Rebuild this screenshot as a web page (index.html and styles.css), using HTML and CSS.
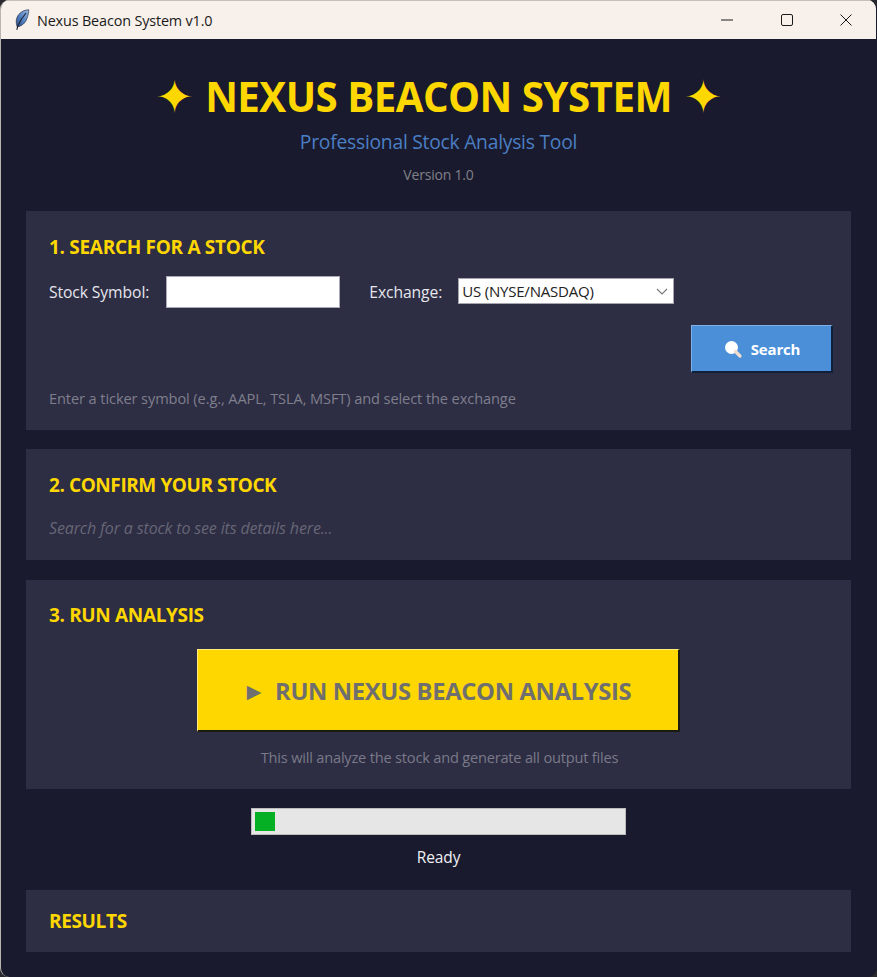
FILE: index.html
```html
<!DOCTYPE html>
<html lang="en">
<head>
<meta charset="utf-8">
<title>Nexus Beacon System v1.0</title>
<link rel="stylesheet" href="styles.css">
</head>
<body>
<div class="window">
  <header class="titlebar">
    <svg class="feather" width="16" height="22" viewBox="0 0 16 22">
      <defs><linearGradient id="quill" x1="1" y1="0" x2="0" y2="1"><stop offset="0" stop-color="#9db8de"/><stop offset=".55" stop-color="#4f7fc0"/><stop offset="1" stop-color="#2c4a80"/></linearGradient></defs>
      <path d="M14.800 .8C10 .8 5 3.500 3 8.500C1.800 11.500 2 15 3.300 18C8 17 11.500 14 13 9.500C14 6.500 14.700 3.500 14.800 .8Z" fill="url(#quill)" stroke="#2c3550" stroke-width=".7"/>
      <path d="M12 4C9 7.500 6 12 3.800 17L2.800 20.800" fill="none" stroke="#1b2233" stroke-width="1.100"/>
    </svg>
    <span class="window-title">Nexus Beacon System v1.0</span>
    <div class="controls">
      <span class="control"><svg width="12" height="12" viewBox="0 0 12 12"><path d="M0 6H12" stroke="#1a1a1a" stroke-width="1"/></svg></span>
      <span class="control"><svg width="12" height="12" viewBox="0 0 12 12"><rect x=".5" y=".5" width="11" height="11" rx="1.500" fill="none" stroke="#1a1a1a" stroke-width="1"/></svg></span>
      <span class="control"><svg width="12" height="12" viewBox="0 0 12 12"><path d="M.5 .5L11.500 11.500M11.500 .5L.5 11.500" stroke="#1a1a1a" stroke-width="1"/></svg></span>
    </div>
  </header>
  <main class="content">
    <div class="hero">
      <h1 class="brand"><span class="star">✦</span><span>NEXUS BEACON SYSTEM</span><span class="star">✦</span></h1>
      <p class="tagline">Professional Stock Analysis Tool</p>
      <p class="version">Version 1.0</p>
    </div>
    <section class="card card-search">
      <h2 class="card-title">1. SEARCH FOR A STOCK</h2>
      <div class="form-row">
        <label class="field-label">Stock Symbol:</label>
        <div class="symbol-input"></div>
        <label class="field-label exchange-label">Exchange:</label>
        <div class="select">
          <span class="select-value">US (NYSE/NASDAQ)</span>
          <svg width="12" height="7" viewBox="0 0 12 7"><path d="M1 1L6 6L11 1" fill="none" stroke="#777" stroke-width="1.100"/></svg>
        </div>
      </div>
      <div class="button-row">
        <button class="search-btn">
          <svg width="20" height="20" viewBox="0 0 20 20"><circle cx="8.500" cy="8.500" r="6.500" fill="#fff"/><path d="M12.500 12.500L17 17" stroke="#f0ddd0" stroke-width="3.200" stroke-linecap="round"/></svg>
          <span>Search</span>
        </button>
      </div>
      <p class="hint">Enter a ticker symbol (e.g., AAPL, TSLA, MSFT) and select the exchange</p>
    </section>
    <section class="card card-confirm">
      <h2 class="card-title">2. CONFIRM YOUR STOCK</h2>
      <p class="placeholder">Search for a stock to see its details here...</p>
    </section>
    <section class="card card-run">
      <h2 class="card-title">3. RUN ANALYSIS</h2>
      <button class="run-btn"><span class="play">▶</span><span>RUN NEXUS BEACON ANALYSIS</span></button>
      <p class="run-note">This will analyze the stock and generate all output files</p>
    </section>
    <div class="progress"><div class="progress-fill"></div></div>
    <p class="status">Ready</p>
    <section class="card card-results">
      <h2 class="card-title">RESULTS</h2>
    </section>
  </main>
</div>
</body>
</html>
```
FILE: styles.css
```css
* { box-sizing: border-box; }
html, body { margin: 0; height: 100%; }
body {
  background: #2a2a2e;
  font-family: "Open Sans", "Noto Sans", sans-serif;
  overflow: hidden;
}
.window {
  height: 977px;
  display: flex;
  flex-direction: column;
  background: #1a1a2e;
  border-left: 1px solid #b9b5b0;
  border-right: 1px solid #1a1a2e;
  border-radius: 9px;
  overflow: hidden;
}
.titlebar {
  height: 39px;
  flex: none;
  display: flex;
  align-items: center;
  background: #f8f1eb;
  border-top: 1px solid #c4c0bb;
  padding-left: 13px;
}
.feather { flex: none; }
.window-title {
  margin-left: 7px;
  font-size: 14.400px;
  letter-spacing: -.15px;
  color: #1a1a1a;
}
.controls { margin-left: auto; display: flex; }
.control {
  width: 59.500px;
  height: 38px;
  display: flex;
  align-items: center;
  justify-content: center;
}
.content {
  flex: 1;
  padding: 0 25px;
  display: flex;
  flex-direction: column;
  min-height: 0;
}
.hero {
  display: flex;
  flex-direction: column;
  align-items: center;
  height: 172px;
  flex: none;
}
.brand {
  margin: 29px 0 0;
  display: flex;
  align-items: center;
  gap: 12px;
  font-size: 40.300px;
  line-height: 58px;
  font-weight: 700;
  letter-spacing: -.55px;
  color: #ffd700;
  white-space: pre;
}
.star { font-family: "DejaVu Sans", sans-serif; font-weight: 400; font-size: 46px; }
.tagline {
  margin: 2px 0 0;
  font-size: 19.300px;
  line-height: 28px;
  letter-spacing: -.25px;
  color: #4a7fc4;
}
.version {
  margin: 9px 0 0;
  font-size: 14px;
  line-height: 20px;
  letter-spacing: -.2px;
  color: #808088;
}
.card {
  flex: none;
  background: #2d2d44;
  padding: 0 19px 0 23px;
}
.card-title {
  margin: 0;
  font-size: 19px;
  line-height: 26px;
  font-weight: 700;
  letter-spacing: -.35px;
  color: #ffd700;
}
.card-search { height: 219px; padding-top: 23px; }
.card-search .card-title { letter-spacing: -.3px; }
.form-row {
  display: flex;
  align-items: center;
  margin-top: 16px;
  height: 32px;
}
.field-label {
  font-size: 15.700px;
  letter-spacing: -.1px;
  color: #e6e6ec;
}
.symbol-input {
  margin-left: 17px;
  width: 174px;
  height: 32px;
  background: #fff;
  border: 1px solid #a9a9b8;
}
.exchange-label { margin-left: 29px; }
.select {
  margin-left: 16px;
  width: 216px;
  height: 26px;
  margin-top: -2px;
  background: #fff;
  border: 1px solid #a6a6ae;
  display: flex;
  align-items: center;
  justify-content: space-between;
  padding: 0 5px 0 3px;
}
.select-value { font-size: 15px; letter-spacing: -.2px; color: #222; }
.button-row {
  display: flex;
  justify-content: flex-end;
  margin-top: 17px;
  margin-right: -1px;
}
.search-btn {
  width: 142px;
  height: 48px;
  display: flex;
  align-items: center;
  justify-content: center;
  gap: 8px;
  background: #4a8fd8;
  border: 0;
  border-top: 1px solid #7fb0e8;
  border-left: 1px solid #7fb0e8;
  border-right: 2px solid #11203a;
  border-bottom: 2px solid #11203a;
  color: #fff;
  font-family: inherit;
  font-size: 15px;
  font-weight: 700;
  letter-spacing: -.2px;
  padding: 0;
}
.hint {
  margin: 15px 0 0;
  font-size: 14.600px;
  line-height: 20px;
  letter-spacing: -.1px;
  color: #7f7f8c;
}
.card-confirm { margin-top: 19px; height: 111px; padding-top: 23px; }
.card-confirm .card-title { letter-spacing: -.42px; }
.placeholder {
  margin: 19px 0 0;
  font-size: 16px;
  line-height: 22px;
  font-style: italic;
  letter-spacing: -.15px;
  color: #666674;
}
.card-run {
  margin-top: 20px;
  height: 209px;
  padding-top: 22px;
  display: flex;
  flex-direction: column;
  align-items: flex-start;
}
.run-btn {
  align-self: center;
  margin: 21px 4px 0 0;
  width: 483px;
  height: 83px;
  display: flex;
  align-items: center;
  justify-content: center;
  gap: 14px;
  background: #ffd700;
  border: 0;
  border-top: 1px solid #ffeb80;
  border-left: 1px solid #ffeb80;
  border-right: 2px solid #1a1a10;
  border-bottom: 2px solid #1a1a10;
  color: #6f6f6f;
  font-family: inherit;
  font-size: 23.800px;
  font-weight: 700;
  letter-spacing: -.35px;
  padding: 2px 0 0 2px;
}
.play { font-family: "DejaVu Sans", sans-serif; font-size: 19px; font-weight: 400; }
.run-note {
  align-self: center;
  margin: 15px 2px 0 0;
  font-size: 14.600px;
  line-height: 20px;
  letter-spacing: -.2px;
  color: #7a7a88;
}
.progress {
  flex: none;
  align-self: center;
  margin-top: 19px;
  margin-left: -1px;
  width: 375px;
  height: 27px;
  background: #e6e6e6;
  border: 1px solid #bcbcbc;
  padding: 3px;
}
.progress-fill { width: 20px; height: 19px; background: #06b025; }
.status {
  flex: none;
  margin: 11px 0 0;
  text-align: center;
  font-size: 15.500px;
  line-height: 22px;
  letter-spacing: -.1px;
  color: #f0f0f4;
}
.card-results { margin-top: 22px; height: 62px; padding-top: 18px; }
```
